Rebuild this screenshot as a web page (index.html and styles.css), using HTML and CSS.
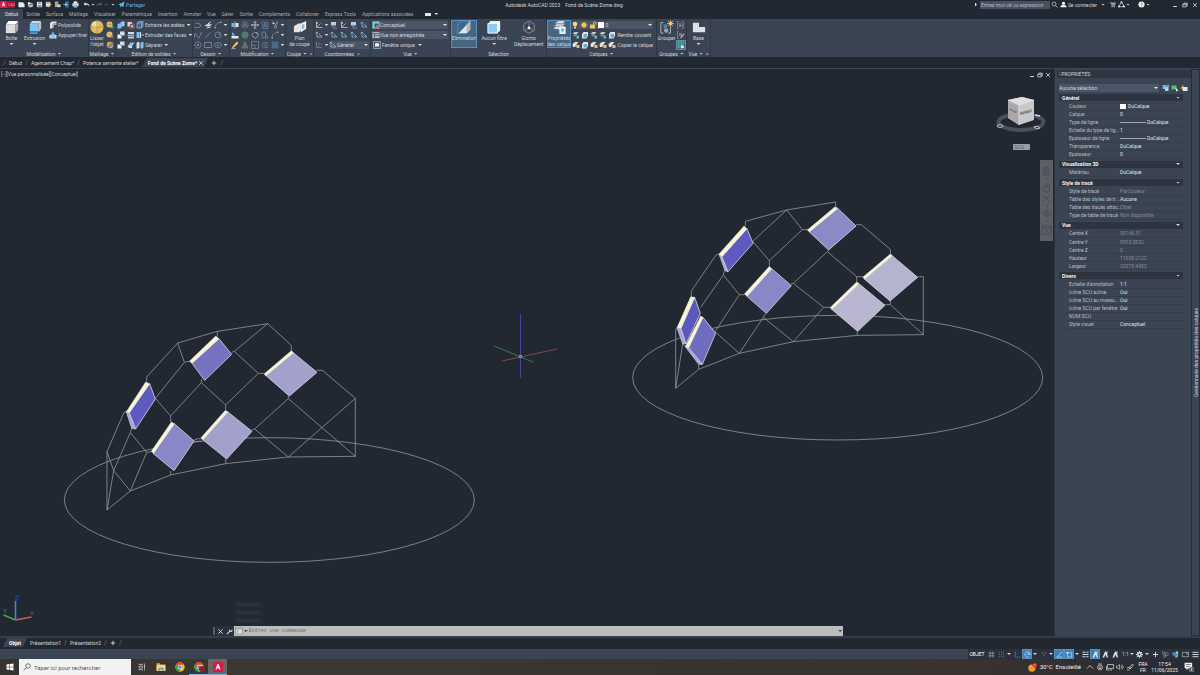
FILE: index.html
```html
<!DOCTYPE html>
<html lang="fr">
<head>
    <meta charset="UTF-8">
    <meta name="viewport" content="width=device-width, initial-scale=1.0">
    <title>Autodesk AutoCAD 2023</title>
    <link rel="stylesheet" href="styles.css">
</head>
<body>
    <svg class="defs" aria-hidden="true">
        <symbol id="box" viewBox="0 0 16 16"><path d="M1 5l3-4h11l-3 4z" fill="#fff"/><path d="M1 5h11v10H1z" fill="#dcdcdc"/><path d="M12 5l3-4v10l-3 4z" fill="#a9a9a9"/></symbol>
        <symbol id="extrude" viewBox="0 0 16 16"><path d="M2 4l3-3h10l-3 3z" fill="#d8d8d8"/><path d="M2 4h10v9H2z" fill="#7cc4f8"/><path d="M12 4l3-3v9l-3 4z" fill="#bfc3c8"/><path d="M2 15h9" stroke="#4e9be0" stroke-width="2"/></symbol>
        <symbol id="poly" viewBox="0 0 16 16"><path d="M2 4l4-3h9v4H9v6l-3 4H2z" fill="#e3e3e3"/><path d="M6 5h9v3H9v5l-3 2z" fill="#aeb2b7"/></symbol>
        <symbol id="press" viewBox="0 0 16 16"><path d="M1 8h14v7H1z" fill="#d5d8dc"/><path d="M4 6h8v7H4zM5 5l3-4 3 4z" fill="#79c2f7"/></symbol>
        <symbol id="sphere" viewBox="0 0 16 16"><circle cx="8" cy="8" r="7.500" fill="#dfb95b"/><circle cx="6" cy="5.500" r="3.500" fill="#f4dc94"/><path d="M1 8h14M8 1v14" stroke="#a8853a" stroke-width=".6"/></symbol>
        <symbol id="mesh1" viewBox="0 0 16 16"><circle cx="7" cy="7" r="6" fill="#e4c268"/><path d="M1 7h12M7 1v12" stroke="#a8853a"/><path d="M9 12h6M12 9v6" stroke="#58c77b" stroke-width="2"/></symbol>
        <symbol id="mesh2" viewBox="0 0 16 16"><circle cx="7" cy="7" r="6" fill="#e4c268"/><path d="M2 4l10 6" stroke="#a8853a"/><path d="M9 12h6" stroke="#e26060" stroke-width="3"/></symbol>
        <symbol id="mesh3" viewBox="0 0 16 16"><circle cx="8" cy="8" r="6.500" fill="#cdb063"/><path d="M3 12l9-8M5 14l9-8" stroke="#3b4453" stroke-width="1.500"/></symbol>
        <symbol id="union" viewBox="0 0 16 16"><path d="M1 7l2-2h4V3l2-2h6v8l-2 2H9v2l-2 2H1z" fill="#79c2f7"/><path d="M9 3h4v7" fill="none" stroke="#e3f3ff"/></symbol>
        <symbol id="subtract" viewBox="0 0 16 16"><path d="M1 2h9v9H1z" fill="#dcdcdc"/><path d="M6 6h8v8H6z" fill="#3b4453" stroke="#e46a6a" stroke-width="1.500"/><path d="M8 9h4v3H8z" fill="#e8e8e8"/></symbol>
        <symbol id="cubes" viewBox="0 0 16 16"><path d="M6 1h9v8H6z" fill="#d9dce0"/><path d="M1 7h8v8H1z" fill="#eef0f2"/><path d="M6 7h3v3H6z" fill="#5fb3ee"/></symbol>
        <symbol id="slice" viewBox="0 0 16 16"><path d="M2 2h12v4H2z" fill="#dcdcdc"/><path d="M1 7h14v3H1z" fill="#5fb3ee"/><path d="M2 11h12v4H2z" fill="#c5c8cc"/></symbol>
        <symbol id="thick" viewBox="0 0 16 16"><path d="M1 10l6-7h8l-5 8z" fill="#79c2f7"/><path d="M1 10h9v4H4z" fill="#d9dce0"/></symbol>
        <symbol id="edges" viewBox="0 0 16 16"><path d="M2 4l3-3h9v9l-3 4H2zM2 4h9v10M11 4l3-3" fill="#4a6682" stroke="#79c2f7" stroke-width="1.500"/></symbol>
        <symbol id="faces" viewBox="0 0 16 16"><path d="M1 2h5v12H1z" fill="#79c2f7"/><path d="M7 2h3v12H7z" fill="#d9dce0"/><path d="M10 8h5M13 6l2 2-2 2" stroke="#79c2f7" stroke-width="1.500" fill="none"/></symbol>
        <symbol id="split" viewBox="0 0 16 16"><path d="M1 4l3-2h3v11l-2 2H1z" fill="#d9dce0"/><path d="M9 4l3-2h3v11l-2 2H9z" fill="#79c2f7"/></symbol>
        <symbol id="pline" viewBox="0 0 16 16"><path d="M1 13h8a4 4 0 000-8H3" fill="none" stroke="#8294a6" stroke-width="1.500"/></symbol>
        <symbol id="helix" viewBox="0 0 16 16"><path d="M2 10l4-3h9l-4 3zM5 15l3-3h6" fill="#dfe3e8" stroke="#dfe3e8"/><path d="M8 6l5-4" stroke="#fff" stroke-width="2"/></symbol>
        <symbol id="arc" viewBox="0 0 16 16"><path d="M2 14C2 7 7 3 14 3" fill="none" stroke="#7e94ab" stroke-width="1.500"/><path d="M1 12h3v3H1zM12 1h3v3h-3z" fill="#69a9de"/></symbol>
        <symbol id="spline" viewBox="0 0 16 16"><path d="M1 14V6q1-3 3 0l4 7q2 2 3-1l4-10" fill="none" stroke="#7e94ab" stroke-width="1.500"/></symbol>
        <symbol id="line" viewBox="0 0 16 16"><path d="M2 14L14 2" stroke="#7e94ab" stroke-width="1.500"/></symbol>
        <symbol id="circle" viewBox="0 0 16 16"><circle cx="8" cy="8" r="6" fill="none" stroke="#7e94ab" stroke-width="1.500"/><path d="M8 8l4-4" stroke="#69a9de" stroke-width="1.500"/></symbol>
        <symbol id="hexa" viewBox="0 0 16 16"><path d="M5 2h6l4 6-4 6H5L1 8z" fill="none" stroke="#7e94ab" stroke-width="1.300"/><circle cx="8" cy="8" r="2" fill="#69a9de"/></symbol>
        <symbol id="rect" viewBox="0 0 16 16"><path d="M1 3h14v10H1z" fill="none" stroke="#7e94ab" stroke-width="1.500"/></symbol>
        <symbol id="ellipse" viewBox="0 0 16 16"><ellipse cx="8" cy="8" rx="7" ry="5" fill="none" stroke="#7e94ab" stroke-width="1.500"/><path d="M8 6v4M6 8h4" stroke="#69a9de"/></symbol>
        <symbol id="mirror" viewBox="0 0 16 16"><path d="M1 4h6v8H1z" fill="#69b6f0"/><path d="M9 4h6v8H9z" fill="#dfe3e8"/><path d="M8 1v14" stroke="#fff"/></symbol>
        <symbol id="gizmo" viewBox="0 0 16 16"><path d="M8 1l6 3.500v7L8 15l-6-3.500v-7zM8 8V1M8 8l6 3.500M8 8l-6 3.500" fill="none" stroke="#8795a4"/><circle cx="8" cy="8" r="2.500" fill="none" stroke="#57b98b"/></symbol>
        <symbol id="move" viewBox="0 0 16 16"><path d="M8 1v14M1 8h14M6 3l2-2 2 2M6 13l2 2 2-2M3 6L1 8l2 2M13 6l2 2-2 2" fill="none" stroke="#e3e6ea" stroke-width="1.400"/></symbol>
        <symbol id="copy" viewBox="0 0 16 16"><circle cx="5" cy="5" r="3.500" fill="none" stroke="#8fa5ba"/><circle cx="11" cy="6" r="3.500" fill="none" stroke="#8fa5ba"/><path d="M3 11h11v4H3z" fill="none" stroke="#69a9de"/></symbol>
        <symbol id="trim" viewBox="0 0 16 16"><path d="M3 1l7 8M12 1v6M2 5h6" stroke="#c8ced5" stroke-width="1.500"/><circle cx="9" cy="12" r="2.500" fill="none" stroke="#8fa5ba" stroke-width="1.500"/></symbol>
        <symbol id="align" viewBox="0 0 16 16"><path d="M1 10h14v5H1z" fill="#e3e6ea"/><path d="M2 2l7 7H2z" fill="#69b6f0"/></symbol>
        <symbol id="rotate" viewBox="0 0 16 16"><path d="M12 3a6 6 0 11-7 0M12 7V3H8" fill="none" stroke="#a9b5c2" stroke-width="1.500"/></symbol>
        <symbol id="globe" viewBox="0 0 16 16"><circle cx="8" cy="8" r="6.500" fill="#44665f" stroke="#7d97a0"/><path d="M2 8h12M8 2v12" stroke="#64b78d"/></symbol>
        <symbol id="stretch" viewBox="0 0 16 16"><path d="M2 2h7v12H2zM9 6l5 8H9" fill="none" stroke="#7e94ab" stroke-width="1.300"/></symbol>
        <symbol id="pencil" viewBox="0 0 16 16"><path d="M3 11L12 1l3 3-9 9z" fill="#efcf62"/><path d="M1 15l2-4 3 2z" fill="#e7a2b2"/><path d="M1 15h8" stroke="#fff"/></symbol>
        <symbol id="pyramid" viewBox="0 0 16 16"><path d="M8 1l6 13H2z" fill="#50615f" stroke="#64a58b"/><path d="M8 2v11" stroke="#d77777"/></symbol>
        <symbol id="scale" viewBox="0 0 16 16"><path d="M1 1h14v14H1zM1 8h7v7" fill="none" stroke="#8294a6" stroke-width="1.300"/></symbol>
        <symbol id="offset" viewBox="0 0 16 16"><path d="M14 3H7a5 5 0 000 10h7M14 6H8a2 2 0 000 4h6" fill="none" stroke="#5f89b0" stroke-width="1.300"/></symbol>
        <symbol id="array" viewBox="0 0 16 16"><path d="M2 2h5v5H2zM9 2h5v5H9zM2 9h5v5H2zM9 9h5v5H9z" fill="#3d5a78" stroke="#5e93c2"/></symbol>
        <symbol id="section" viewBox="0 0 16 16"><path d="M1 7l5-3h6v6l-5 4H1z" fill="#e3e3e3"/><path d="M9 4l6-3v9l-6 4z" fill="#f6f6f6"/><path d="M10 6l3-2v5l-3 2z" fill="#6db9f1"/></symbol>
        <symbol id="ucs" viewBox="0 0 16 16"><path d="M3 1v12h12M3 13l8-8" fill="none" stroke="#c5ccd4" stroke-width="1.500"/><circle cx="4" cy="4" r="2" fill="#e8b864"/></symbol>
        <symbol id="ucs2" viewBox="0 0 16 16"><path d="M4 2v10h10M1 5l3-3 3 3" fill="none" stroke="#a9b8c7" stroke-width="1.500"/><path d="M8 6l6 6" stroke="#65b0ee" stroke-width="2"/></symbol>
        <symbol id="ucs3" viewBox="0 0 16 16"><path d="M2 2h10v7H2z" fill="#c5ccd4"/><path d="M6 6v8h8" fill="none" stroke="#65b0ee" stroke-width="1.500"/></symbol>
        <symbol id="ucsd" viewBox="0 0 16 16"><path d="M3 2v11h10M8 3v7M11 5l3 3" fill="none" stroke="#7f8c9a" stroke-width="1.500"/></symbol>
        <symbol id="conceptual" viewBox="0 0 16 16"><path d="M1 1h14v14H1z" fill="#7bd3dc"/><path d="M5 5h8v8H5z" fill="#31558c"/><path d="M8 8h7v7H8z" fill="#e36253"/></symbol>
        <symbol id="viewicon" viewBox="0 0 16 16"><path d="M1 2h14v12H1z" fill="#aeb6bf"/><path d="M1 5h14M5 5v9M5 9h10" stroke="#4a5464" stroke-width="1.500"/></symbol>
        <symbol id="window" viewBox="0 0 16 16"><path d="M1 1h14v14H1z" fill="#46596d" stroke="#9fb2c5" stroke-width="1.500"/><path d="M4 5l4-1 4 1v6H4z" fill="#e6f4ff"/></symbol>
        <symbol id="cull" viewBox="0 0 16 16"><path d="M1 5l4-4h10v10l-4 4H1z" fill="#3e688b" stroke="#7bbbea" stroke-dasharray="1 1"/><path d="M2 15L15 1v10l-4 4z" fill="#e3e5e7"/><path d="M11 5l4-4v10l-4 4z" fill="#b6babe"/></symbol>
        <symbol id="filter" viewBox="0 0 16 16"><path d="M2 3l2-2h11v11l-2 2" fill="#f4f4f4"/><path d="M1 4h11v11H1z" fill="#8dcbf8" stroke="#fff"/></symbol>
        <symbol id="gizmobig" viewBox="0 0 16 16"><path d="M8 1l6 4v7l-6 3-6-3V5z" fill="none" stroke="#84909f"/><path d="M8 9V3" stroke="#6d8dda"/><path d="M8 9l5 3" stroke="#d87171"/><path d="M8 9l-5 3" stroke="#66b37a"/><circle cx="8" cy="9" r="1.500" fill="#fff"/></symbol>
        <symbol id="layers" viewBox="0 0 16 16"><path d="M1 10l4-3h9l-4 4zM2 7l4-3h9l-4 4zM3 4l4-3h8l-3 4z" fill="#e3e5e7" stroke="#5b6572" stroke-width=".5"/><path d="M9 8h6v8H9z" fill="#d8ecfb" stroke="#fff"/><path d="M10.500 10h3v3h-3z" fill="#5ba6e0"/></symbol>
        <symbol id="bulb" viewBox="0 0 16 16"><circle cx="8" cy="6" r="4.500" fill="#f8dc77"/><path d="M6 11h4v4H6z" fill="#d2d2d2"/></symbol>
        <symbol id="sun" viewBox="0 0 16 16"><circle cx="8" cy="8" r="5" fill="#f5c54e"/><path d="M8 1v14M1 8h14M3 3l10 10M13 3L3 13" stroke="#f5c54e"/></symbol>
        <symbol id="lock" viewBox="0 0 16 16"><path d="M2 7h10v8H2z" fill="#efc15a"/><path d="M9 7V4a2.500 2.500 0 015 0v3" fill="none" stroke="#efc15a" stroke-width="2"/></symbol>
        <symbol id="lay1" viewBox="0 0 16 16"><path d="M1 6l4-4h8l-4 5z" fill="#c5cbd1"/><path d="M2 10l3-3h5l-3 4z" fill="#8b96a2"/><path d="M9 9h5v6H9z" fill="#57c6c0"/></symbol>
        <symbol id="lay2" viewBox="0 0 16 16"><path d="M2 6l3-4h9v8l-3 5H2z" fill="#e1e4e7"/><path d="M5 6h7v7H5z" fill="#6fa6d2"/></symbol>
        <symbol id="lay3" viewBox="0 0 16 16"><path d="M1 6l5-4h7l-4 5v5H2z" fill="#e1e4e7"/><path d="M9 8h6v6H9z" fill="#efc15a"/><path d="M6 9h3v3H6z" fill="#8b96a2"/></symbol>
        <symbol id="group" viewBox="0 0 16 16"><path d="M4 3H1v12h3M9 15h3V8" fill="none" stroke="#b4bcc5"/><path d="M4 5h4v4H4z" fill="#4f86b8"/><circle cx="7" cy="12" r="2.500" fill="#9aa5b1"/><circle cx="12" cy="4" r="2.200" fill="#f4c65c"/><path d="M12 0v8M8 4h8M9 1l6 6M15 1L9 7" stroke="#f4c65c" stroke-width=".8"/></symbol>
        <symbol id="ungroup" viewBox="0 0 16 16"><path d="M4 1H1v14h3M9 1h3v14H9" fill="none" stroke="#aab3bd"/><path d="M4 4h4v8H4z" fill="#4f86b8"/><path d="M8 8l7 5M15 5l-7 5" stroke="#e06464" stroke-width="1.500"/></symbol>
        <symbol id="gedit" viewBox="0 0 16 16"><path d="M4 1H1v14h3" fill="none" stroke="#aab3bd"/><path d="M4 4h6v6H4z" fill="#4f86b8"/><path d="M7 14l7-8" stroke="#e89a54" stroke-width="2.500"/></symbol>
        <symbol id="gsel" viewBox="0 0 16 16"><path d="M2 2h11v11H2z" fill="#3f8f7b" stroke="#78d0b5"/><path d="M8 7l7 6-4 .5-2 2.500z" fill="#fff"/></symbol>
        <symbol id="base" viewBox="0 0 16 16"><path d="M1 3h7v5h7v6H1z" fill="#dfe1e4"/></symbol>
        <symbol id="file" viewBox="0 0 16 16"><path d="M1 3h10l4 4v7H1z" fill="#e8eaec"/></symbol>
        <symbol id="open" viewBox="0 0 16 16"><path d="M2 3h5l1 2h5v2H5l-3 6z" fill="#e8eaec"/><path d="M5 8h10l-3 6H3z" fill="#b8bdc3"/></symbol>
        <symbol id="save" viewBox="0 0 16 16"><path d="M2 2h12v12H2z" fill="#e8eaec"/><path d="M5 3h6v4H5zM4 9h8v5H4z" fill="#858e99"/></symbol>
        <symbol id="saveas" viewBox="0 0 16 16"><path d="M2 2h10v11H2z" fill="#e8eaec"/><path d="M4 3h6v3H4z" fill="#858e99"/><path d="M7 14l7-7" stroke="#e3a868" stroke-width="3"/></symbol>
        <symbol id="web" viewBox="0 0 16 16"><path d="M2 1h8v13H2z" fill="#a9a08e"/><path d="M8 8h7v6H8z" fill="#d6d8dc"/></symbol>
        <symbol id="phone" viewBox="0 0 16 16"><path d="M5 1h8v14H5z" fill="#3178b5"/><path d="M1 8h8M6 5l3 3-3 3" fill="none" stroke="#dce9f4" stroke-width="1.500"/></symbol>
        <symbol id="print" viewBox="0 0 16 16"><path d="M4 1h8v4H4z" fill="#fff"/><path d="M1 5h14v7H1z" fill="#d9dee3"/><path d="M4 9h8v6H4z" fill="#79c2f7"/></symbol>
        <symbol id="undo" viewBox="0 0 16 16"><path d="M6 3L1 7l5 4V8.500c4 0 6 0 9 3.500 0-4-3-7-9-7z" fill="#dfe3e8"/></symbol>
        <symbol id="redo" viewBox="0 0 16 16"><path d="M10 3l5 4-5 4V8.500c-4 0-6 0-9 3.500 0-4 3-7 9-7z" fill="#5b6470"/></symbol>
        <symbol id="plane" viewBox="0 0 16 16"><path d="M1 8L15 1l-3 13-4-3-3 4v-5z" fill="#64b5e8"/></symbol>
        <symbol id="search" viewBox="0 0 16 16"><circle cx="7" cy="7" r="4.500" fill="none" stroke="currentColor" stroke-width="1.600"/><path d="M10 10l5 5" stroke="currentColor" stroke-width="1.600"/></symbol>
        <symbol id="searchleft" viewBox="0 0 16 16"><circle cx="10" cy="6" r="4.500" fill="none" stroke="currentColor" stroke-width="1.300"/><path d="M7 9.500L1 15" stroke="currentColor" stroke-width="1.300"/></symbol>
        <symbol id="user" viewBox="0 0 16 16"><circle cx="8" cy="5" r="3.500" fill="#fff"/><path d="M1 14c0-7 14-7 14 0z" fill="#fff"/></symbol>
        <symbol id="cart" viewBox="0 0 16 16"><path d="M1 3h3l2 7h7l2-6H5" fill="#8b929b" stroke="#b6bbc2"/><circle cx="7" cy="13" r="1.500" fill="#ddd"/><circle cx="12" cy="13" r="1.500" fill="#ddd"/></symbol>
        <symbol id="apps" viewBox="0 0 16 16"><path d="M8 2l6 11H2z" fill="none" stroke="#eee" stroke-width="1.600"/><path d="M6 1h4v3H6zM0 11h4v3H0zM12 11h4v3h-4z" fill="#eee"/></symbol>
        <symbol id="help" viewBox="0 0 16 16"><circle cx="8" cy="8" r="7" fill="#f2f2f2"/><path d="M6 6q2-3 4 0 0 1-2 3v1M8 11v2" fill="none" stroke="#303743" stroke-width="1.300"/></symbol>
        <symbol id="min" viewBox="0 0 16 16"><path d="M3 12h10" stroke="#e3e3e3" stroke-width="2.500"/></symbol>
        <symbol id="restore" viewBox="0 0 16 16"><path d="M2 6h9v7H2zM5 6V3h9v7h-3" fill="none" stroke="#e3e3e3" stroke-width="2"/></symbol>
        <symbol id="close" viewBox="0 0 16 16"><path d="M3 3l10 10M13 3L3 13" stroke="#e3e3e3" stroke-width="2"/></symbol>
        <symbol id="plus" viewBox="0 0 16 16"><path d="M8 2v12M2 8h12" stroke="#e3e3e3" stroke-width="2.200"/></symbol>
        <symbol id="quick" viewBox="0 0 16 16"><path d="M1 2h8v8H1z" fill="#6bb7ee"/><path d="M6 6h7v8H6z" fill="#a8d8f5"/><path d="M12 1v6M9 4h6" stroke="#5fd08b" stroke-width="2"/></symbol>
        <symbol id="pick" viewBox="0 0 16 16"><path d="M1 3h10v8H1z" fill="#5bbd7f"/><path d="M9 7l6 6-3 .5-1 2.500z" fill="#fff"/></symbol>
        <symbol id="flash" viewBox="0 0 16 16"><path d="M7 1L1 9h4l-1 5 5-6H6z" fill="#f1c45e"/><path d="M6 6h9v8H6z" fill="#e6e8eb"/></symbol>
        <symbol id="gridi" viewBox="0 0 16 16"><path d="M5 1v14M11 1v14M1 5h14M1 11h14" stroke="#aab1ba" stroke-width="1.400"/></symbol>
        <symbol id="dots" viewBox="0 0 16 16"><path d="M2 3h12M2 8h12M2 13h12" stroke="#89919b" stroke-width="2" stroke-dasharray="2 3"/></symbol>
        <symbol id="ortho" viewBox="0 0 16 16"><path d="M3 1v13h12" fill="none" stroke="#79828e" stroke-width="1.500"/></symbol>
        <symbol id="polar" viewBox="0 0 16 16"><path d="M14 8a6 6 0 10-3 5M8 8h7M8 8l5-6" fill="none" stroke="#bde0fa" stroke-width="1.600"/></symbol>
        <symbol id="iso" viewBox="0 0 16 16"><path d="M3 2l9 11M12 2v5" stroke="#87909b" stroke-width="1.400"/></symbol>
        <symbol id="track" viewBox="0 0 16 16"><path d="M14 2L2 14h12" fill="none" stroke="#cfe8fb" stroke-width="1.500"/></symbol>
        <symbol id="snap" viewBox="0 0 16 16"><path d="M3 4h10v10H3z" fill="none" stroke="#cfe8fb" stroke-width="1.500"/><path d="M1 2h4v4H1z" fill="#cfe8fb"/></symbol>
        <symbol id="weight" viewBox="0 0 16 16"><path d="M1 3h7M10 3h5M1 8h14M1 13h7M10 13h5" stroke="#d9dde1" stroke-width="2.500"/></symbol>
        <symbol id="person" viewBox="0 0 16 16"><path d="M7 1h3l4 14h-3L8 8l-3 7H1z" fill="#e3e6e9"/><path d="M12 1v5" stroke="#e3e6e9" stroke-width="1.500"/></symbol>
        <symbol id="gear" viewBox="0 0 16 16"><circle cx="8" cy="8" r="4" fill="none" stroke="#f0f0f0" stroke-width="3"/><path d="M8 0v3M8 13v3M0 8h3M13 8h3M2 2l3 3M11 11l3 3M14 2l-3 3M5 11l-3 3" stroke="#f0f0f0" stroke-width="2"/></symbol>
        <symbol id="isolate" viewBox="0 0 16 16"><path d="M1 2h5v5H1zM8 4h6v6H8zM4 9h5v5H4z" fill="none" stroke="#929aa5" stroke-width="1.300"/></symbol>
        <symbol id="perf" viewBox="0 0 16 16"><path d="M1 3h8v7H1z" fill="#3f93d9"/><path d="M9 1h5v6H9z" fill="#e9bc4e"/><circle cx="10" cy="11" r="4.500" fill="#3f8fd0"/><path d="M8 11l2 2 3-4" stroke="#fff" fill="none"/></symbol>
        <symbol id="screen" viewBox="0 0 16 16"><path d="M1 3h14v10H1z" fill="none" stroke="#c9ced4" stroke-width="1.400"/><path d="M9 9l4-4M10 5h3v3" stroke="#c9ced4" fill="none"/></symbol>
        <symbol id="burger" viewBox="0 0 16 16"><path d="M1 3h14M1 8h14M1 13h14" stroke="#e3e6e9" stroke-width="2"/></symbol>
        <symbol id="wrench" viewBox="0 0 16 16"><path d="M2 14l7-7" stroke="#d0d4d9" stroke-width="2.500"/><path d="M14 3l-3 3-2-1V2c-3 2-2 7 2 7s5-3 3-6z" fill="#d0d4d9"/></symbol>
        <symbol id="prompt" viewBox="0 0 16 16"><path d="M1 2h14v12H1z" fill="#ddd" stroke="#777"/><path d="M1 4h14M3 7l3 2-3 2" stroke="#666" fill="none"/></symbol>
        <symbol id="win" viewBox="0 0 16 16"><path d="M1 3l6-1v5.500H1zM8 2l7-1v6.500H8zM1 8.500h6V14l-6-1zM8 8.500h7V15l-7-1z" fill="#fff"/></symbol>
        <symbol id="taskview" viewBox="0 0 16 16"><path d="M2 1v2h7V1M2 15v-2h7v2M2 6h7v4H2zM13 1v14M12 6h3" fill="none" stroke="#dcdcdc" stroke-width="1.300"/></symbol>
        <symbol id="folder" viewBox="0 0 16 16"><path d="M1 2h5l1 2h8v10H1z" fill="#e3a93a"/><path d="M1 5h14v9H1z" fill="#fbd972"/><path d="M4 9h8v5h-2v-2H6v2H4z" fill="#4b9fdb"/></symbol>
        <symbol id="chrome" viewBox="0 0 16 16"><circle cx="8" cy="8" r="7.500" fill="#fbc116"/><path d="M1.500 4.250a7.500 7.500 0 0113 0H8L5 10z" fill="#e34133"/><path d="M1.500 4.250L5 10l3 2-1 3.500A7.500 7.500 0 011.500 4.250z" fill="#30a351"/><circle cx="8" cy="8" r="3.500" fill="#fff"/><circle cx="8" cy="8" r="2.700" fill="#4385f3"/></symbol>
        <symbol id="acad" viewBox="0 0 16 16"><rect width="16" height="16" rx="1" fill="#dd1849"/><path d="M4 12L7 3h2l3 9h-2l-.6-2H6.600L6 12z" fill="#fff"/></symbol>
        <symbol id="weather" viewBox="0 0 16 16"><circle cx="7" cy="9" r="6.500" fill="#f39a27"/><circle cx="12" cy="4" r="4" fill="#d93535"/><path d="M12 2v3" stroke="#fff"/></symbol>
        <symbol id="up" viewBox="0 0 16 16"><path d="M2 11l6-6 6 6" fill="none" stroke="#e3e3e3" stroke-width="1.600"/></symbol>
        <symbol id="meet" viewBox="0 0 16 16"><circle cx="8" cy="9" r="5" fill="none" stroke="#ddd" stroke-width="1.400"/><path d="M4 2h8M6 8h4v3H6z" fill="none" stroke="#ddd" stroke-width="1.300"/></symbol>
        <symbol id="net" viewBox="0 0 16 16"><path d="M3 3h12v8H3zM1 6v8h5M7 14h5" fill="none" stroke="#ddd" stroke-width="1.400"/></symbol>
        <symbol id="vol" viewBox="0 0 16 16"><path d="M1 6h3l3-3v10l-3-3H1zM10 5q3 3 0 6M12 3q5 5 0 10" fill="none" stroke="#ddd" stroke-width="1.200"/></symbol>
        <symbol id="pen" viewBox="0 0 16 16"><path d="M2 10q3-4 4 0t5-1M6 10L13 2l2 2-7 8zM2 14h5" fill="none" stroke="#ddd" stroke-width="1.400"/></symbol>
        <symbol id="notif" viewBox="0 0 16 16"><path d="M1 1h12v9H7l-3 3v-3H1z" fill="#f1f1f1"/><path d="M3 4h8M3 7h6" stroke="#444"/><circle cx="12" cy="12" r="4" fill="#555" stroke="#ccc" stroke-width=".6"/><path d="M12 10v4" stroke="#fff"/></symbol>
    </svg>

    <header class="titlebar">
        <div class="quick">
            <button class="app-btn" aria-label="Menu"><svg><use href="#acad"/></svg><span>CAD</span></button>
            <button class="ic" aria-label="Nouveau"><svg><use href="#file"/></svg></button>
            <button class="ic" aria-label="Ouvrir"><svg><use href="#open"/></svg></button>
            <button class="ic" aria-label="Enregistrer"><svg><use href="#save"/></svg></button>
            <button class="ic" aria-label="Enregistrer sous"><svg><use href="#saveas"/></svg></button>
            <button class="ic" aria-label="Web"><svg><use href="#web"/></svg></button>
            <button class="ic" aria-label="Mobile"><svg><use href="#phone"/></svg></button>
            <button class="ic" aria-label="Tracer"><svg><use href="#print"/></svg></button>
            <button class="ic undo" aria-label="Annuler"><svg><use href="#undo"/></svg></button><i class="caret"></i>
            <button class="ic" aria-label="Rétablir"><svg><use href="#redo"/></svg></button><i class="caret dim"></i>
            <i class="caret lone"></i>
            <button class="share"><svg><use href="#plane"/></svg>Partager</button>
        </div>
        <div class="doc-title"><span>Autodesk AutoCAD 2023</span><span>Fond de Scène Zome.dwg</span></div>
        <div class="account">
            <i class="caret-r"></i>
            <input type="text" class="help-search" placeholder="Entrez mot-clé ou expression" aria-label="Recherche">
            <button class="ic" aria-label="Rechercher"><svg><use href="#search"/></svg></button>
            <button class="sign-in"><svg><use href="#user"/></svg>Se connecter</button><i class="caret"></i>
            <button class="ic" aria-label="Boutique"><svg><use href="#cart"/></svg></button>
            <button class="ic" aria-label="Applications"><svg><use href="#apps"/></svg></button><i class="caret"></i>
            <button class="ic help-btn" aria-label="Aide"><svg><use href="#help"/></svg></button><i class="caret"></i>
            <div class="win-btns">
                <button class="ic" aria-label="Réduire"><svg><use href="#min"/></svg></button>
                <button class="ic" aria-label="Restaurer"><svg><use href="#restore"/></svg></button>
                <button class="ic" aria-label="Fermer"><svg><use href="#close"/></svg></button>
            </div>
        </div>
    </header>

    <nav class="menu">
        <button class="active">Début</button><button>Solide</button><button>Surface</button><button>Maillage</button><button>Visualiser</button><button>Paramétrique</button><button>Insertion</button><button>Annoter</button><button>Vue</button><button>Gérer</button><button>Sortie</button><button>Compléments</button><button>Collaborer</button><button>Express Tools</button><button>Applications associées</button>
        <button class="menu-more" aria-label="Réduire le ruban"><i></i></button><i class="caret"></i>
    </nav>

    <section class="ribbon">
        <div class="panel p-model">
            <div class="panel-body">
                <button class="big"><svg><use href="#box"/></svg><span>Boîte</span><i class="caret"></i></button>
                <button class="big"><svg><use href="#extrude"/></svg><span>Extrusion</span><i class="caret"></i></button>
                <div class="rows">
                    <button class="cmd"><svg><use href="#poly"/></svg>Polysolide</button>
                    <button class="cmd"><svg><use href="#press"/></svg>Appuyer/tirer</button>
                </div>
            </div>
            <h2>Modélisation <i class="caret"></i></h2>
        </div>
        <div class="panel p-mesh">
            <div class="panel-body">
                <button class="big narrow"><svg><use href="#sphere"/></svg><span>Lisser<br>l'objet</span></button>
                <div class="rows">
                    <button class="ic" aria-label="Lisser plus"><svg><use href="#mesh1"/></svg></button>
                    <button class="ic" aria-label="Lisser moins"><svg><use href="#mesh2"/></svg></button>
                    <button class="ic" aria-label="Affiner"><svg><use href="#mesh3"/></svg></button>
                </div>
            </div>
            <h2>Maillage <i class="caret"></i></h2>
        </div>
        <div class="panel p-solids">
            <div class="panel-body">
                <div class="icons cols-2">
                    <button class="ic" aria-label="Union"><svg><use href="#union"/></svg></button>
                    <button class="ic" aria-label="Soustraction"><svg><use href="#subtract"/></svg></button>
                    <button class="ic" aria-label="Intersection"><svg><use href="#cubes"/></svg></button>
                    <button class="ic" aria-label="Section"><svg><use href="#slice"/></svg></button>
                    <button class="ic" aria-label="Interférence"><svg><use href="#cubes"/></svg></button>
                    <button class="ic" aria-label="Epaissir"><svg><use href="#thick"/></svg></button>
                </div>
                <div class="rows">
                    <button class="cmd"><svg><use href="#edges"/></svg>Extraire les arêtes<i class="caret"></i></button>
                    <button class="cmd"><svg><use href="#faces"/></svg>Extruder des faces<i class="caret"></i></button>
                    <button class="cmd"><svg><use href="#split"/></svg>Séparer<i class="caret"></i></button>
                </div>
            </div>
            <h2>Edition de solides <i class="caret"></i></h2>
        </div>
        <div class="panel p-draw">
            <div class="panel-body">
                <div class="icons cols-3c">
                    <button class="ic" aria-label="Polyligne"><svg><use href="#pline"/></svg></button>
                    <button class="ic" aria-label="Hélice"><svg><use href="#helix"/></svg></button>
                    <button class="ic" aria-label="Arc"><svg><use href="#arc"/></svg></button><i class="caret"></i>
                    <button class="ic" aria-label="Spline"><svg><use href="#spline"/></svg></button>
                    <button class="ic" aria-label="Ligne"><svg><use href="#line"/></svg></button>
                    <button class="ic" aria-label="Cercle"><svg><use href="#circle"/></svg></button><i class="caret"></i>
                    <button class="ic" aria-label="Polygone"><svg><use href="#hexa"/></svg></button>
                    <button class="ic" aria-label="Rectangle"><svg><use href="#rect"/></svg></button>
                    <button class="ic" aria-label="Ellipse"><svg><use href="#ellipse"/></svg></button><i class="caret"></i>
                </div>
            </div>
            <h2>Dessin <i class="caret"></i></h2>
        </div>
        <div class="panel p-modify">
            <div class="panel-body">
                <div class="icons cols-5c">
                    <button class="ic" aria-label="Miroir 3D"><svg><use href="#mirror"/></svg></button>
                    <button class="ic" aria-label="Déplacer 3D"><svg><use href="#gizmo"/></svg></button>
                    <button class="ic" aria-label="Déplacer"><svg><use href="#move"/></svg></button>
                    <button class="ic" aria-label="Copier"><svg><use href="#copy"/></svg></button>
                    <button class="ic" aria-label="Ajuster"><svg><use href="#trim"/></svg></button><i class="caret"></i>
                    <button class="ic" aria-label="Aligner"><svg><use href="#align"/></svg></button>
                    <button class="ic" aria-label="Rotation 3D"><svg><use href="#globe"/></svg></button>
                    <button class="ic" aria-label="Rotation"><svg><use href="#rotate"/></svg></button>
                    <button class="ic" aria-label="Etirer"><svg><use href="#stretch"/></svg></button>
                    <button class="ic" aria-label="Raccord"><svg><use href="#arc"/></svg></button><i class="caret"></i>
                    <button class="ic" aria-label="Effacer"><svg><use href="#pencil"/></svg></button>
                    <button class="ic" aria-label="Echelle 3D"><svg><use href="#pyramid"/></svg></button>
                    <button class="ic" aria-label="Echelle"><svg><use href="#scale"/></svg></button>
                    <button class="ic" aria-label="Décaler"><svg><use href="#offset"/></svg></button>
                    <button class="ic" aria-label="Réseau"><svg><use href="#array"/></svg></button><i class="caret"></i>
                </div>
            </div>
            <h2>Modification <i class="caret"></i></h2>
        </div>
        <div class="panel p-cut">
            <div class="panel-body">
                <button class="big"><svg><use href="#section"/></svg><span>Plan<br>de coupe</span></button>
            </div>
            <h2>Coupe <i class="caret"></i><b>»</b></h2>
        </div>
        <div class="panel p-coord">
            <div class="panel-body">
                <div class="icons cols-coord">
                    <button class="ic" aria-label="SCU"><svg><use href="#ucs"/></svg></button><i class="caret"></i>
                    <button class="ic" aria-label="SCU nommé"><svg><use href="#ucs3"/></svg></button>
                    <button class="ic" aria-label="SCU origine"><svg><use href="#ucs"/></svg></button>
                    <button class="ic" aria-label="SCU vue"><svg><use href="#ucs3"/></svg></button>
                    <button class="ic" aria-label="SCU objet"><svg><use href="#ucs2"/></svg></button>
                    <button class="ic" aria-label="SCU précédent"><svg><use href="#ucs2"/></svg></button><i class="caret"></i>
                    <button class="ic" aria-label="SCU face"><svg><use href="#ucs2"/></svg></button>
                    <button class="ic" aria-label="SCU Z"><svg><use href="#ucs2"/></svg></button>
                    <button class="ic" aria-label="SCU X"><svg><use href="#ucs2"/></svg></button>
                    <button class="ic" aria-label="SCU Y"><svg><use href="#ucs2"/></svg></button>
                    <button class="ic" aria-label="SCU icône"><svg><use href="#ucsd"/></svg></button><i class="caret"></i>
                    <span class="drop wide-4"><svg><use href="#ucs2"/></svg><select aria-label="SCU courant"><option>Général</option></select></span>
                </div>
            </div>
            <h2>Coordonnées <b>»</b></h2>
        </div>
        <div class="panel p-view">
            <div class="panel-body">
                <div class="rows stretch">
                    <span class="drop"><svg><use href="#conceptual"/></svg><select aria-label="Style visuel"><option>Conceptuel</option></select></span>
                    <span class="drop"><svg><use href="#viewicon"/></svg><select aria-label="Vue"><option>Vue non enregistrée</option></select></span>
                    <button class="cmd"><svg><use href="#window"/></svg>Fenêtre unique<i class="caret"></i></button>
                </div>
            </div>
            <h2>Vue <i class="caret"></i></h2>
        </div>
        <div class="panel p-select">
            <div class="panel-body">
                <button class="big on"><svg><use href="#cull"/></svg><span>Elimination</span></button>
                <button class="big grow"><svg><use href="#filter"/></svg><span>Aucun filtre</span><i class="caret"></i></button>
                <button class="big grow"><svg><use href="#gizmobig"/></svg><span>Gizmo<br>Déplacement</span></button>
            </div>
            <h2>Sélection</h2>
        </div>
        <div class="panel p-layers">
            <div class="panel-body">
                <button class="big on"><svg><use href="#layers"/></svg><span>Propriétés<br>des calque</span></button>
                <div class="rows grow">
                    <span class="drop"><svg><use href="#bulb"/></svg><svg><use href="#sun"/></svg><svg><use href="#lock"/></svg><i class="swatch"></i><select aria-label="Calque"><option>0</option></select></span>
                    <div class="line">
                        <button class="ic" aria-label="Désactiver"><svg><use href="#lay1"/></svg></button>
                        <button class="ic" aria-label="Isoler"><svg><use href="#lay2"/></svg></button>
                        <button class="ic" aria-label="Geler"><svg><use href="#lay1"/></svg></button>
                        <button class="ic" aria-label="Verrouiller"><svg><use href="#lay1"/></svg></button>
                        <button class="cmd"><svg><use href="#lay2"/></svg>Rendre courant</button>
                    </div>
                    <div class="line">
                        <button class="ic" aria-label="Activer"><svg><use href="#lay3"/></svg></button>
                        <button class="ic" aria-label="Désisoler"><svg><use href="#lay2"/></svg></button>
                        <button class="ic" aria-label="Libérer"><svg><use href="#lay3"/></svg></button>
                        <button class="ic" aria-label="Déverrouiller"><svg><use href="#lay3"/></svg></button>
                        <button class="cmd"><svg><use href="#lay3"/></svg>Copier le calque</button>
                    </div>
                </div>
            </div>
            <h2>Calques <i class="caret"></i></h2>
        </div>
        <div class="panel p-groups">
            <div class="panel-body">
                <button class="big"><svg><use href="#group"/></svg><span>Grouper</span></button>
                <div class="rows">
                    <button class="ic" aria-label="Dissocier"><svg><use href="#ungroup"/></svg></button>
                    <button class="ic" aria-label="Modifier"><svg><use href="#gedit"/></svg></button>
                    <button class="ic on" aria-label="Sélection de groupe"><svg><use href="#gsel"/></svg></button>
                </div>
            </div>
            <h2>Groupes <i class="caret"></i></h2>
        </div>
        <div class="panel p-base">
            <div class="panel-body">
                <button class="big"><svg><use href="#base"/></svg><span>Base</span><i class="caret"></i></button>
            </div>
            <h2>Vue <i class="caret"></i><b>»</b></h2>
        </div>
    </section>

    <nav class="doc-tabs">
        <span class="slash">/</span><button>Début</button><span class="slash">/</span><button>Agencement Chap*</button><span class="slash">/</span><button>Potence servante atelier*</button>
        <button class="active">Fond de Scène Zome*<svg><use href="#close"/></svg></button>
        <button class="add" aria-label="Nouveau dessin"><svg><use href="#plus"/></svg></button><span class="slash">/</span>
    </nav>

    <main class="workspace">
        <div class="viewport">
            <svg class="model" viewBox="0 0 1055 567" preserveAspectRatio="xMinYMin slice">
                <!-- left dome -->
                <g transform="translate(50 241) scale(.33333)">
                    <ellipse class="wire" cx="658" cy="570" rx="615" ry="187"/>
                    <path class="wire" d="M230 305L222 307 171 425V600L241 543 362 495 527 461 715 441 916 439V265L817 181H800M290 215V201L383 99 502 64V80M502 64L653 41 724 106V123M653 41L553 124 545 127M553 124L625 190H643M625 190L527 285V300M527 285L454 218V208M454 218L362 318V336M362 318L316 265 403 157 418 154M403 157L383 99M245 355L241 368 191 482 171 600M171 425L191 482 241 543 290 427 305 425M290 427L241 368M362 483V495M432 390L445 386H455M432 394H455M527 447V461M605 360L614 357 715 266V258M614 357L715 441 916 265M715 266L916 439"/>
                    <path class="face" fill="#7573c0" d="M426 160L507 86 545 133 464 211z"/>
                    <path class="lit" d="M418 154L497 78 507 86 426 160z"/>
                    <path class="face" fill="#a3a1cc" d="M646 195L727 126 801 187 718 258z"/>
                    <path class="lit" d="M642 192L724 122 730 129 648 197z"/>
                    <path class="side" d="M229 305L238 308 257 357 245 355z"/>
                    <path class="face" fill="#5d5bc0" d="M238 308L299 221 316 267 257 357z"/>
                    <path class="lit" d="M229 305L287 216 299 221 238 308z"/>
                    <path class="face" fill="#8987c6" d="M309 430L373 341 432 393 372 482z"/>
                    <path class="lit" d="M304 424L364 336 373 341 311 430z"/>
                    <path class="face" fill="#a3a1cc" d="M457 388L530 303 606 364 530 447z"/>
                    <path class="lit" d="M453 383L526 301 533 307 459 389z"/>
                </g>
                <!-- right dome -->
                <g transform="translate(600 111) scale(.33333)">
                    <ellipse class="wire" cx="713" cy="593" rx="615" ry="187"/>
                    <path class="wire" d="M232 443L227 447V625L296 568 418 520 580 485 772 466 970 464V290H953M274 350V333L348 225 360 222M436 138V124L560 90 707 66V80M768 134H784L871 208V223M560 90L607 149H625M607 149L508 242V258M560 90L458 184 508 242M373 272L370 285 302 382M370 285L418 344H433M418 344L345 455 418 520 490 412 498 400M490 412L580 485 671 382H690M671 382L580 310 572 312M580 310L682 215 686 210M682 215L770 290H788M770 290V306M772 455V466M853 374H871V362M871 374L970 464M296 553V568M227 625L248 492 258 498"/>
                    <path class="side" d="M357 222L366 230 384 275 375 272z"/>
                    <path class="face" fill="#5d5bc0" d="M366 230L441 146 459 190 384 275z"/>
                    <path class="lit" d="M357 222L432 138 441 146 366 230z"/>
                    <path class="face" fill="#8c8ac6" d="M628 156L710 82 768 138 686 210z"/>
                    <path class="lit" d="M622 150L705 80 712 87 628 156z"/>
                    <path class="face" fill="#8987c6" d="M441 349L515 266 574 317 499 400z"/>
                    <path class="lit" d="M433 342L508 259 515 266 441 349z"/>
                    <path class="face" fill="#b5b4cf" d="M792 296L873 224 953 292 870 363z"/>
                    <path class="lit" d="M788 292L871 222 876 228 794 297z"/>
                    <path class="face" fill="#b8b7cf" d="M693 386L773 308 855 376 773 454z"/>
                    <path class="lit" d="M690 383L770 306 776 312 696 388z"/>
                    <path class="side" d="M231 443L243 445 258 490 248 492z"/>
                    <path class="face" fill="#5b59bd" d="M243 445L284 352 301 400 258 492z"/>
                    <path class="lit" d="M231 443L272 350 284 352 243 445z"/>
                    <path class="side" d="M256 500L266 503 307 553 296 553z"/>
                    <path class="face" fill="#6f6dc0" d="M266 503L309 412 347 460 307 553z"/>
                    <path class="lit" d="M256 500L302 408 309 412 266 503z"/>
                </g>
                <!-- crosshair -->
                <path d="M520.500 245v64" stroke="#45489a" fill="none"/>
                <path d="M494 277l39 16" stroke="#3c7a4c" fill="none"/>
                <path d="M502 292l55-12" stroke="#82474f" fill="none"/>
                <path d="M519.500 286.500h2v2h-2z" stroke="#999" fill="none"/>
                <!-- UCS icon -->
                <g fill="none" stroke-width="1.600">
                    <path d="M15.500 551v-19" stroke="#4f82cf"/>
                    <path d="M15.500 551l-12-5" stroke="#45a54d"/>
                    <path d="M15.500 551l16-3" stroke="#c76062"/>
                    <path d="M15 527h4l-4 4h4" stroke="#27479b" stroke-width="1"/>
                    <path d="M3 540l2 2 2-2M5 542v2" stroke="#26743a" stroke-width="1"/>
                    <path d="M30 542l4 4M34 542l-4 4" stroke="#93343a" stroke-width="1"/>
                </g>
            </svg>
            <div class="view-head">
                <span>[−][Vue personnalisée][Conceptuel]</span>
                <div class="view-btns">
                    <button class="ic" aria-label="Réduire"><svg><use href="#min"/></svg></button>
                    <button class="ic" aria-label="Restaurer"><svg><use href="#restore"/></svg></button>
                    <button class="ic" aria-label="Fermer"><svg><use href="#close"/></svg></button>
                </div>
            </div>
            <div class="cube-box">
                <svg class="cube" viewBox="0 0 52 38">
                    <ellipse cx="26" cy="25" rx="22.500" ry="8" fill="none" stroke="#4a5058" stroke-width="4"/>
                    <path d="M13 3l14-3 12 3v20l-15 5-11-7z" fill="#c8c8c8"/>
                    <path d="M13 3l14-3 12 3-15 5z" fill="#dedede"/>
                    <path d="M13 3l11 5v20l-11-7z" fill="#a9a9a9"/>
                    <path d="M24 8v20M13 3l11 5 15-5" fill="none" stroke="#e9e9e9" stroke-width=".7"/>
                    <text x="25" y="18" transform="rotate(-14 25 18)">AVANT</text>
                    <text class="small" x="14" y="13" transform="rotate(24 14 13)">GAUC</text>
                    <ellipse cx="5" cy="29" rx="3" ry="1.300" fill="#2c3138" stroke="#c9c9c9"/>
                    <path d="M39 30q3-2 6 1l-3 1z" fill="#2c3138" stroke="#c9c9c9"/>
                    <path d="M40 18l5 1" stroke="#d9d9d9" stroke-width="1.500"/>
                </svg>
                <button class="scg">SCG</button>
            </div>
            <div class="navbar">
                <svg viewBox="0 0 13 81">
                    <g fill="none" stroke="#464b50">
                        <circle cx="6.500" cy="11.500" r="4"/><rect x="5" y="10" width="3" height="3"/>
                        <path d="M6 19h2M6 46h2M6 61h2"/>
                        <path d="M3 28l2 4h4l1-6M5 28v-4M7 28v-5M9 27v-4"/>
                        <path d="M2 35l8 7M10 35l-8 7M9 41l2 2"/>
                        <path d="M6.500 49v9M3 54q4 4 8 0M3 53q4-3 8 0"/>
                        <path d="M2 66h9v8H2zM2 68h9M5 70l3 2"/>
                    </g>
                </svg>
            </div>
            <div class="command">
                <div class="history"><span>Commande:</span><span>Commande:</span><span>Commande:</span></div>
                <div class="command-row">
                    <i class="grip"></i>
                    <button class="ic" aria-label="Fermer"><svg><use href="#close"/></svg></button>
                    <button class="ic" aria-label="Personnaliser"><svg><use href="#wrench"/></svg></button>
                    <label class="command-box"><svg><use href="#prompt"/></svg><i class="caret"></i><input type="text" placeholder="Entrez une commande" aria-label="Commande"><i class="caret"></i></label>
                </div>
            </div>
        </div>

        <aside class="properties">
            <h1>⁝ PROPRIÉTÉS</h1>
            <div class="selection">
                <span class="drop"><select aria-label="Sélection"><option>Aucune sélection</option></select></span>
                <button class="ic" aria-label="Ajouter"><svg><use href="#quick"/></svg></button>
                <button class="ic" aria-label="Choisir"><svg><use href="#pick"/></svg></button>
                <button class="ic" aria-label="Sélection rapide"><svg><use href="#flash"/></svg></button>
            </div>
            <h3>Général <i class="caret"></i></h3>
            <table>
                <tr><th>Couleur</th><td><i class="swatch"></i>DuCalque</td></tr>
                <tr><th>Calque</th><td>0</td></tr>
                <tr><th>Type de ligne</th><td><i class="dash"></i>DuCalque</td></tr>
                <tr><th>Echelle du type de lig...</th><td>1</td></tr>
                <tr><th>Epaisseur de ligne</th><td><i class="dash"></i>DuCalque</td></tr>
                <tr><th>Transparence</th><td>DuCalque</td></tr>
                <tr><th>Epaisseur</th><td>0</td></tr>
            </table>
            <h3>Visualisation 3D <i class="caret"></i></h3>
            <table>
                <tr><th>Matériau</th><td>DuCalque</td></tr>
            </table>
            <h3>Style de tracé <i class="caret"></i></h3>
            <table>
                <tr><th>Style de tracé</th><td class="off">ParCouleur</td></tr>
                <tr><th>Table des styles de tr...</th><td>Aucune</td></tr>
                <tr><th>Table des tracés attac...</th><td class="off">Objet</td></tr>
                <tr><th>Type de table de tracé</th><td class="off">Non disponible</td></tr>
            </table>
            <h3>Vue <i class="caret"></i></h3>
            <table>
                <tr><th>Centre X</th><td class="off">59146.31</td></tr>
                <tr><th>Centre Y</th><td class="off">8903.3832</td></tr>
                <tr><th>Centre Z</th><td class="off">0</td></tr>
                <tr><th>Hauteur</th><td class="off">11058.2122</td></tr>
                <tr><th>Largeur</th><td class="off">23373.4453</td></tr>
            </table>
            <h3>Divers <i class="caret"></i></h3>
            <table>
                <tr><th>Echelle d'annotation</th><td>1:1</td></tr>
                <tr><th>Icône SCU active</th><td>Oui</td></tr>
                <tr><th>Icône SCU au niveau...</th><td>Oui</td></tr>
                <tr><th>Icône SCU par fenêtre</th><td>Oui</td></tr>
                <tr><th>NOM SCU</th><td></td></tr>
                <tr><th>Style visuel</th><td>Conceptuel</td></tr>
            </table>
        </aside>
        <aside class="layer-strip"><span>Gestionnaire des propriétés des calques</span></aside>
    </main>

    <nav class="layout-tabs">
        <button class="active">Objet</button><button>Présentation1</button><span class="slash">/</span><button>Présentation2</button><span class="slash">/</span>
        <button class="add" aria-label="Nouvelle présentation"><svg><use href="#plus"/></svg></button><span class="slash">/</span>
    </nav>

    <div class="status">
        <div class="status-tools">
            <button class="space">OBJET</button>
            <button class="ic" aria-label="Grille"><svg><use href="#gridi"/></svg></button>
            <button class="ic" aria-label="Résolution"><svg><use href="#dots"/></svg></button><i class="caret"></i>
            <button class="ic" aria-label="Ortho"><svg><use href="#ortho"/></svg></button>
            <button class="ic on" aria-label="Polaire"><svg><use href="#polar"/></svg></button><i class="caret"></i>
            <button class="ic" aria-label="Isométrique"><svg><use href="#iso"/></svg></button><i class="caret"></i>
            <button class="ic on" aria-label="Repérage"><svg><use href="#track"/></svg></button>
            <button class="ic on" aria-label="Accrochage"><svg><use href="#snap"/></svg></button><i class="caret"></i>
            <button class="ic" aria-label="Epaisseur"><svg><use href="#weight"/></svg></button>
            <button class="ic on" aria-label="Annotations"><svg><use href="#person"/></svg></button>
            <button class="ic" aria-label="Echelle auto"><svg><use href="#person"/></svg></button>
            <button class="ic" aria-label="Echelle"><svg><use href="#person"/></svg></button>
            <button class="ratio">1:1<i class="caret"></i></button>
            <button class="ic" aria-label="Espace de travail"><svg><use href="#gear"/></svg></button><i class="caret"></i>
            <button class="ic" aria-label="Moniteur"><svg><use href="#plus"/></svg></button>
            <button class="ic" aria-label="Isoler"><svg><use href="#isolate"/></svg></button>
            <button class="ic" aria-label="Performances"><svg><use href="#perf"/></svg></button>
            <button class="ic" aria-label="Plein écran"><svg><use href="#screen"/></svg></button>
            <button class="ic" aria-label="Personnalisation"><svg><use href="#burger"/></svg></button>
        </div>
    </div>

    <footer class="taskbar">
        <button class="task start" aria-label="Démarrer"><svg><use href="#win"/></svg></button>
        <label class="task-search"><svg><use href="#searchleft"/></svg><input type="text" placeholder="Taper ici pour rechercher" aria-label="Recherche Windows"></label>
        <button class="task" aria-label="Vue des tâches"><svg><use href="#taskview"/></svg></button>
        <button class="task" aria-label="Explorateur"><svg><use href="#folder"/></svg></button>
        <button class="task" aria-label="Chrome"><svg><use href="#chrome"/></svg></button>
        <button class="task open" aria-label="Chrome, profil"><svg><use href="#chrome"/></svg><i class="profile"></i></button>
        <button class="task open current" aria-label="AutoCAD"><svg><use href="#acad"/></svg></button>
        <div class="tray">
            <button class="weather"><svg><use href="#weather"/></svg>30°C&nbsp; Ensoleillé</button>
            <button class="ic" aria-label="Icônes cachées"><svg><use href="#up"/></svg></button>
            <button class="ic" aria-label="Caméra"><svg><use href="#meet"/></svg></button>
            <button class="ic" aria-label="Réseau"><svg><use href="#net"/></svg></button>
            <button class="ic" aria-label="Volume"><svg><use href="#vol"/></svg></button>
            <button class="ic" aria-label="Stylet"><svg><use href="#pen"/></svg></button>
            <span class="lang">FRA<br>FR</span>
            <span class="clock">17:54<br>11/06/2025</span>
            <button class="task notif" aria-label="Notifications"><svg><use href="#notif"/></svg></button>
        </div>
    </footer>
</body>
</html>
```

FILE: styles.css
```css
* {
    box-sizing: border-box;
}

body {
    margin: 0;
    height: 100vh;
    display: flex;
    flex-direction: column;
    overflow: hidden;
    background-color: #222831;
    color: #d3d6da;
    font-family: Roboto, "Open Sans", sans-serif;
    font-size: 5px;
    line-height: 6px;
}

button, input, select {
    font: inherit;
    color: inherit;
    background: none;
    border: none;
    margin: 0;
    padding: 0;
    white-space: nowrap;
}

h1, h2, h3 {
    margin: 0;
    font-size: 5px;
    font-weight: normal;
}

svg {
    width: 8px;
    height: 8px;
    flex: none;
}

.defs {
    display: none;
}

.ic {
    width: 10px;
    height: 10px;
    flex: none;
    display: flex;
    align-items: center;
    justify-content: center;
}

.caret {
    flex: none;
    width: 4px;
    height: 2px;
    background-color: #d3d6da;
    clip-path: polygon(0 0, 100% 0, 50% 100%);
}

.caret.dim {
    background-color: #5b6470;
}

.slash {
    color: #6a727d;
    font-size: 7px;
}

.swatch {
    width: 6px;
    height: 6px;
    background-color: #fff;
}

.drop {
    position: relative;
    display: flex;
    align-items: center;
    height: 8px;
    background-color: #4a5668;
}

.drop select {
    appearance: none;
    flex: 1;
    min-width: 0;
    height: 8px;
    outline: none;
}

.drop::after {
    content: "";
    position: absolute;
    right: 1px;
    top: 3px;
    width: 4px;
    height: 2px;
    background-color: #e3e6e9;
    clip-path: polygon(0 0, 100% 0, 50% 100%);
}

/* title bar */
.titlebar {
    display: flex;
    justify-content: space-between;
    align-items: center;
    height: 9px;
    flex: none;
}

.quick, .account, .win-btns {
    display: flex;
    align-items: center;
}

.quick svg, .account svg {
    width: 7px;
    height: 7px;
}

.quick .ic {
    width: 9px;
}

.quick .undo {
    margin-left: 2px;
}

.app-btn {
    display: flex;
    align-items: center;
    gap: 1px;
    width: 15px;
    height: 7px;
    margin-right: 2px;
    background-color: #a3123a;
    color: #e9a9b9;
    overflow: hidden;
}

.app-btn span {
    font-size: 4px;
}

.caret.lone {
    margin: 0 3px;
}

.share {
    display: flex;
    align-items: center;
    gap: 1px;
    color: #64b5e8;
}

.doc-title {
    display: flex;
    gap: 5px;
    padding-left: 8px;
}

.caret-r {
    width: 2px;
    height: 4px;
    margin-right: 3px;
    background-color: #fff;
    clip-path: polygon(0 0, 100% 50%, 0 100%);
}

.help-search {
    width: 70px;
    height: 8px;
    padding: 0 1px;
    background-color: #465062;
    font-style: italic;
}

.help-search::placeholder {
    color: #b6bcc5;
}

.sign-in {
    display: flex;
    align-items: center;
    gap: 1px;
    padding: 0 4px 0 1px;
}

.account .ic {
    width: 9px;
}

.account .caret {
    margin-right: 3px;
}

.help-btn {
    margin-left: 4px;
}

.win-btns {
    margin-left: 18px;
    gap: 1px;
}

.win-btns svg {
    width: 6px;
    height: 6px;
}

/* ribbon tabs */
.menu {
    display: flex;
    align-items: stretch;
    height: 10px;
    flex: none;
    color: #a6acb4;
}

.menu button {
    padding: 0 3px;
}

.menu .active {
    padding: 0 5px;
    background-color: #3b4453;
    color: #dfe2e5;
}

.menu-more i {
    display: block;
    width: 6px;
    height: 3px;
    margin-left: 6px;
    background-color: #e3e6e9;
}

.menu .caret {
    align-self: center;
}

/* ribbon */
.ribbon {
    display: flex;
    height: 38px;
    flex: none;
    background-color: #3b4453;
}

.panel {
    display: flex;
    flex-direction: column;
    flex: none;
    border-right: 1px solid #2f3744;
}

.panel h2 {
    display: flex;
    align-items: center;
    justify-content: center;
    gap: 2px;
    height: 7px;
}

.panel h2 b {
    margin-left: 1px;
    font-weight: normal;
}

.panel-body {
    display: flex;
    height: 31px;
    padding-top: 1px;
}

.p-model { width: 89px; }
.p-mesh { width: 27px; }
.p-solids { width: 77px; }
.p-draw { width: 37px; }
.p-modify { width: 56px; }
.p-cut { width: 28px; }
.p-coord { width: 57px; }
.p-view { width: 80px; }
.p-select { width: 96px; }
.p-layers { width: 110px; }
.p-groups { width: 30px; }
.p-base { width: 24px; }

.big {
    display: flex;
    flex-direction: column;
    align-items: center;
    width: 23px;
    height: 28px;
}

.big svg {
    width: 14px;
    height: 14px;
    margin-bottom: 1px;
}

.big .caret {
    margin-top: 2px;
}

.big.narrow {
    width: 16px;
}

.big.on, .ic.on {
    background-color: #456582;
    outline: 1px solid #5b8fba;
    outline-offset: -1px;
}

.big.on {
    width: 26px;
}

.grow {
    flex: 1;
}

.rows {
    display: flex;
    flex-direction: column;
}

.rows .drop {
    margin: 1px 0;
}

.p-model .rows {
    margin-left: 2px;
}

.stretch {
    flex: 1;
    padding: 0 2px 0 1px;
}

.line {
    display: flex;
}

.line .ic {
    width: 9px;
}

.cmd {
    display: flex;
    align-items: center;
    gap: 1px;
    height: 10px;
    padding-left: 1px;
}

.cmd .caret {
    margin-left: 2px;
}

.p-solids .cmd {
    padding-left: 0;
}

.p-solids .cmd .caret {
    margin-left: 1px;
}

.icons {
    display: grid;
    grid-auto-rows: 10px;
    align-items: center;
    justify-items: center;
}

.cols-2 { grid-template-columns: repeat(2, 10px); }
.cols-3c { grid-template-columns: repeat(3, 10px) 5px; }
.cols-5c { grid-template-columns: repeat(5, 10px) 5px; }
.cols-coord { grid-template-columns: 10px 5px repeat(4, 10px); }

.wide-4 {
    grid-column: span 4;
    justify-self: stretch;
}

.p-cut .big {
    width: 27px;
}

.p-groups .big {
    width: 19px;
}

.p-layers .rows {
    padding-right: 3px;
}

.p-layers .drop {
    gap: 1px;
}

/* drawing tabs */
.doc-tabs, .layout-tabs {
    display: flex;
    align-items: center;
    flex: none;
}

.doc-tabs {
    height: 12px;
    padding-left: 3px;
    border-bottom: 1px solid #3b4453;
}

.doc-tabs button {
    padding: 0 3px;
}

.doc-tabs .active {
    display: flex;
    align-items: center;
    gap: 1px;
    height: 9px;
    padding: 0 4px 0 6px;
    background-color: #3b4453;
    color: #fff;
    font-weight: bold;
    clip-path: polygon(5px 0, 100% 0, calc(100% - 4px) 100%, 0 100%);
}

.doc-tabs svg, .layout-tabs svg {
    width: 6px;
    height: 6px;
}

.doc-tabs .add, .layout-tabs .add {
    display: flex;
    padding: 0 3px;
}

/* drawing area */
.workspace {
    display: flex;
    flex: 1;
    min-height: 0;
}

.viewport {
    position: relative;
    flex: 1;
    min-width: 0;
}

.model {
    position: absolute;
    inset: 0;
    width: 100%;
    height: 100%;
}

.wire {
    fill: none;
    stroke: #9da0a5;
    stroke-width: 2.2;
}

.face {
    stroke: #d3d3e4;
    stroke-width: 2.5;
}

.lit {
    fill: #f8f6da;
    stroke: #f8f6da;
    stroke-width: 1;
}

.side {
    fill: #a5a4d8;
    stroke: #d3d3e4;
    stroke-width: 2;
}

.view-head {
    position: relative;
    display: flex;
    justify-content: space-between;
    height: 10px;
    padding: 2px 2px 0 1px;
}

.view-btns {
    display: flex;
}

.view-btns .ic {
    width: 8px;
    height: 7px;
}

.view-btns svg {
    width: 6px;
    height: 6px;
}

.cube-box {
    position: absolute;
    top: 28px;
    right: 7px;
    width: 52px;
    display: flex;
    flex-direction: column;
    align-items: center;
}

.cube {
    width: 52px;
    height: 38px;
    margin-bottom: 9px;
}

.cube text {
    font-size: 4px;
    font-weight: bold;
    fill: #55585c;
}

.cube .small {
    font-size: 3px;
}

.scg {
    width: 17px;
    height: 6px;
    border-radius: 1px;
    background-color: #9a9dab;
    color: #5a5d68;
    text-align: left;
    padding-left: 2px;
}

.navbar {
    position: absolute;
    top: 91px;
    right: 1px;
    width: 13px;
    background-color: #5b6064;
}

.navbar svg {
    display: block;
    width: 13px;
    height: 81px;
}

.command {
    position: absolute;
    left: 20%;
    right: 20%;
    bottom: 0;
}

.history {
    display: flex;
    flex-direction: column;
    gap: 2px;
    width: 27px;
    margin: 0 0 2px 25px;
    font-family: "Liberation Mono", monospace;
    color: #3b414a;
}

.history span {
    background-color: #252b34;
}

.command-row {
    display: flex;
    align-items: center;
    height: 10px;
}

.command-row > .ic {
    width: 9px;
    background-color: #2b313b;
}

.command-row > .ic svg {
    width: 7px;
    height: 7px;
}

.grip {
    width: 2px;
    height: 8px;
    margin: 0 1px 0 2px;
    background-color: #555c66;
}

.command-box {
    display: flex;
    align-items: center;
    flex: 1;
    gap: 1px;
    height: 10px;
    padding: 0 1px;
    background-color: #bdbdbd;
}

.command-box input {
    flex: 1;
    font-family: "Liberation Mono", monospace;
    font-style: italic;
}

.command-box input::placeholder {
    color: #6b6b6b;
}

.command-box .caret {
    background-color: #444;
}

/* properties palette */
.properties {
    width: 137px;
    flex: none;
    padding: 1px 0 0 2px;
    background-color: #3b4453;
    border-left: 1px solid #2a313c;
}

.properties h1 {
    height: 8px;
    padding: 1px 2px;
    background-color: #2f3643;
}

.selection {
    display: flex;
    align-items: center;
    height: 10px;
    margin: 5px 0 0 2px;
}

.selection .drop {
    width: 100px;
    margin-right: 2px;
}

.selection .ic {
    width: 9px;
}

.properties h3 {
    display: flex;
    align-items: center;
    justify-content: space-between;
    height: 7px;
    margin: 2px 8px 1px 2px;
    padding: 0 3px;
    background-color: #2d3440;
    color: #f1f2f4;
    font-weight: bold;
}

.selection + h3 {
    margin-top: 1px;
}

.properties table {
    width: 117px;
    margin-left: 9px;
    border-collapse: collapse;
    table-layout: fixed;
}

.properties th, .properties td {
    height: 8px;
    padding: 0 0 0 3px;
    border-bottom: 1px solid #353d4b;
    font-weight: normal;
    text-align: left;
    white-space: nowrap;
}

.properties th {
    width: 54px;
    color: #b9bec5;
}

.properties td {
    padding-left: 0;
    color: #dfe2e6;
}

.properties td.off {
    color: #868d97;
}

.properties td .swatch {
    display: inline-block;
    height: 5px;
    margin-right: 2px;
    vertical-align: bottom;
}

.dash {
    display: inline-block;
    width: 26px;
    height: 1px;
    margin-right: 1px;
    vertical-align: middle;
    background-color: #a0a6ae;
}

.layer-strip {
    display: flex;
    align-items: center;
    justify-content: center;
    width: 9px;
    flex: none;
    background-color: #3b4453;
    border: 1px solid #252c37;
}

.layer-strip span {
    writing-mode: vertical-rl;
    transform: rotate(180deg);
}

/* layout tabs */
.layout-tabs {
    height: 13px;
    padding-bottom: 2px;
    border-top: 2px solid #343d4a;
}

.layout-tabs button {
    padding: 0 3px;
}

.layout-tabs .active {
    width: 24px;
    height: 9px;
    margin-left: 3px;
    padding: 0;
    background-color: #3b4453;
    color: #fff;
    font-weight: bold;
    clip-path: polygon(4px 0, 100% 0, calc(100% - 4px) 100%, 0 100%);
}

/* status bar */
.status {
    display: flex;
    justify-content: flex-end;
    height: 10px;
    flex: none;
    background-color: #3b4453;
}

.status-tools {
    display: flex;
    align-items: center;
    background-color: #2a313c;
}

.status-tools .caret {
    margin: 0 1px;
}

.space {
    width: 18px;
    height: 10px;
    color: #fff;
}

.ratio {
    display: flex;
    align-items: center;
    width: 14px;
    padding-left: 2px;
}

.status-tools svg {
    width: 7px;
    height: 7px;
}

.status-tools .ic.on {
    background-color: #3f7fb8;
}

/* taskbar */
.taskbar {
    display: flex;
    align-items: stretch;
    height: 16px;
    flex: none;
    background: linear-gradient(90deg, #35332f, #3b3835 25%, #37322f 70%, #3a332f 80%, #242b36);
    color: #f1f1f1;
    font-size: 6px;
}

.task {
    position: relative;
    display: flex;
    align-items: center;
    justify-content: center;
    width: 19px;
}

.task svg {
    width: 10px;
    height: 10px;
}

.task.start svg, .task-search + .task svg {
    width: 8px;
    height: 8px;
}

.task.open {
    border-bottom: 1px solid #76b9ed;
}

.task.current {
    background-color: #6b6663;
}

.profile {
    position: absolute;
    right: 3px;
    bottom: 2px;
    width: 6px;
    height: 6px;
    border-radius: 50%;
    background-color: #8c2130;
}

.task-search {
    display: flex;
    align-items: center;
    gap: 3px;
    width: 112px;
    margin-right: 1px;
    padding-left: 4px;
    background-color: #f2f2f2;
    color: #333;
}

.task-search input {
    flex: 1;
    min-width: 0;
}

.task-search input::placeholder {
    color: #555;
}

.tray {
    display: flex;
    align-items: center;
    margin-left: auto;
}

.weather {
    display: flex;
    align-items: center;
    gap: 3px;
    margin-right: 4px;
}

.weather svg {
    width: 9px;
    height: 9px;
}

.tray svg {
    flex: none;
}

.lang, .clock {
    font-size: 5px;
    text-align: center;
}

.lang {
    width: 16px;
}

.clock {
    width: 27px;
}

.notif {
    width: 22px;
}
```
